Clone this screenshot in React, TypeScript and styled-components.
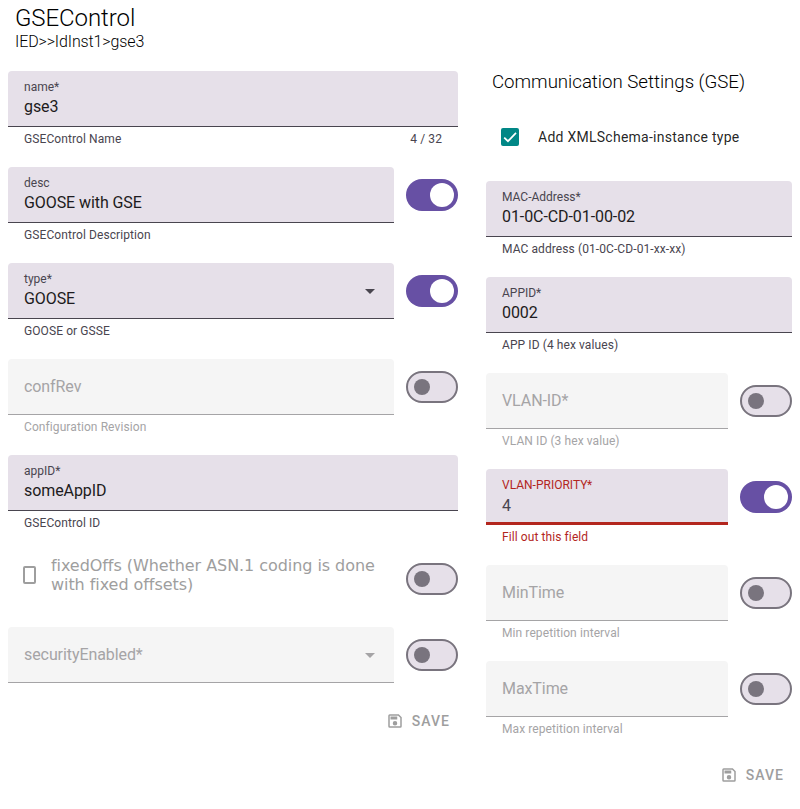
import React from 'react';
import styled, { createGlobalStyle } from 'styled-components';

const Global = createGlobalStyle`
  * { box-sizing: border-box; }
  body { margin: 0; background: #fff; font-family: Roboto, sans-serif; color: #1d1b20; }
`;
const Page = styled.main`
  width: 800px; height: 809px; overflow: hidden; padding: 0 8px;
`;
const Title = styled.h1`
  margin: 0; padding: 4px 7px 0; font-size: 24px; line-height: 28px; font-weight: 300; color: #000; letter-spacing: -0.07px;
`;
const Path = styled.div`
  padding: 0 7px; font-size: 16px; line-height: 19px; font-weight: 300; color: #000; letter-spacing: -0.12px;
`;
const Columns = styled.div`
  display: grid; grid-template-columns: 450px 306px; column-gap: 28px; margin-top: 20px; align-items: start;
`;
const Column = styled.section`
  display: flex; flex-direction: column;
`;
const Row = styled.div<{ $h?: number }>`
  display: flex; gap: 12px; height: ${p => p.$h ?? 96}px; align-items: flex-start;
`;
const FieldWrap = styled.div`
  flex: 1; min-width: 0;
`;
const Box = styled.div<{ $state: string }>`
  height: 56px; padding: 9px 16px 0; border-radius: 4px 4px 0 0; display: flex; justify-content: space-between;
  background: ${p => (p.$state === 'disabled' ? '#f5f5f5' : '#e6e0e9')};
  border-bottom: ${p => (p.$state === 'error' ? '3px solid #b3261e' : p.$state === 'disabled' ? '1px solid #a5a4a6' : '1px solid #49454f')};
`;
const Label = styled.div<{ $error: boolean }>`
  font-size: 12px; line-height: 14px; color: ${p => (p.$error ? '#b3261e' : '#49454f')};
`;
const Value = styled.div<{ $error: boolean }>`
  font-size: 16px; line-height: 24px; padding-top: ${p => (p.$error ? 2 : 1)}px; letter-spacing: -0.08px;
  color: ${p => (p.$error ? '#49454f' : '#1d1b20')};
`;
const Placeholder = styled.div`
  font-size: 16px; line-height: 24px; padding-top: 7px; letter-spacing: -0.08px; color: #a5a4a6;
`;
const Support = styled.div<{ $state: string }>`
  display: flex; justify-content: space-between; padding: 4px 16px 0; font-size: 12px; line-height: 16px; letter-spacing: 0.09px;
  color: ${p => (p.$state === 'error' ? '#b3261e' : p.$state === 'disabled' ? '#a5a4a6' : '#49454f')};
`;
const Arrow = styled.svg`
  width: 10px; height: 5px; margin: 17px 3px 0 0; flex: none;
`;
const Track = styled.div<{ $on: boolean }>`
  width: 52px; height: 32px; margin-top: 12px; flex: none; border-radius: 16px; display: flex; align-items: center;
  justify-content: ${p => (p.$on ? 'flex-end' : 'flex-start')};
  padding: 0 ${p => (p.$on ? 4 : 6)}px;
  background: ${p => (p.$on ? '#6750a4' : '#e6e0e9')};
  border: ${p => (p.$on ? 'none' : '2px solid #79747e')};
`;
const Knob = styled.span<{ $on: boolean }>`
  width: ${p => (p.$on ? 24 : 16)}px; height: ${p => (p.$on ? 24 : 16)}px; border-radius: 50%;
  background: ${p => (p.$on ? '#fff' : '#79747e')};
`;
const SectionTitle = styled.h2`
  margin: 0; padding: 0 6px; height: 50px; font-size: 18.7px; line-height: 22px; font-weight: 300; color: #000; letter-spacing: -0.03px;
`;
const CheckRow = styled.label`
  display: flex; align-items: center; height: 32px; padding-left: 15px; gap: 19px; font-size: 14px;
  letter-spacing: 0.26px; color: rgba(0, 0, 0, 0.87); margin-bottom: 28px;
`;
const CheckIcon = styled.svg`
  width: 18px; height: 18px; flex: none;
`;
const OffsetBox = styled.span`
  width: 13px; height: 18px; border: 2px solid #9e9e9e; border-radius: 2px; margin: 15px 0 0 15px; flex: none;
`;
const OffsetText = styled.div`
  flex: 1; margin: 5px 0 0 3px; font: 16px/19px "DejaVu Sans", sans-serif; letter-spacing: -0.06px; color: #9e9e9e;
`;
const Save = styled.button`
  align-self: flex-end; display: flex; align-items: center; gap: 8px; height: 36px; padding: 0 8px; border: 0;
  background: none; font: 500 14px Roboto, sans-serif; letter-spacing: 1px; color: #9e9e9e;
`;

interface FieldProps {
  label: string; value?: string; help?: string; count?: string; select?: boolean;
  error?: boolean; toggle?: boolean; height?: number;
}
function Field({ label, value, help, count, select, error = false, toggle, height }: FieldProps) {
  const disabled = value === undefined;
  const state = error ? 'error' : disabled ? 'disabled' : 'normal';
  return (
    <Row $h={height}>
      <FieldWrap>
        <Box $state={state}>
          {disabled ? <Placeholder>{label}</Placeholder> : (
            <div><Label $error={error}>{label}</Label><Value $error={error}>{value}</Value></div>
          )}
          {select && <Arrow viewBox="0 0 10 5"><path d="M0 0h10L5 5z" fill={disabled ? '#a5a4a6' : '#49454f'} /></Arrow>}
        </Box>
        {help && <Support $state={state}><span>{help}</span>{count && <span>{count}</span>}</Support>}
      </FieldWrap>
      {toggle !== undefined && <Switch on={toggle} />}
    </Row>
  );
}
function Switch({ on }: { on: boolean }) {
  return <Track $on={on} role="switch" aria-checked={on}><Knob $on={on} /></Track>;
}
function SaveButton() {
  return (
    <Save>
      <svg width="18" height="18" viewBox="0 0 24 24" fill="currentColor">
        <path d="M17 3H5a2 2 0 0 0-2 2v14a2 2 0 0 0 2 2h14a2 2 0 0 0 2-2V7zm2 16H5V5h11.170L19 7.830zm-7-7a3 3 0 1 0 0 6 3 3 0 0 0 0-6M6 6h9v4H6z" />
      </svg>
      SAVE
    </Save>
  );
}

export default function App() {
  return (
    <>
      <Global />
      <Page>
        <Title>GSEControl</Title>
        <Path>IED&gt;&gt;IdInst1&gt;gse3</Path>
        <Columns>
          <Column>
            <Field label="name*" value="gse3" help="GSEControl Name" count="4 / 32" />
            <Field label="desc" value="GOOSE with GSE" help="GSEControl Description" toggle />
            <Field label="type*" value="GOOSE" help="GOOSE or GSSE" select toggle />
            <Field label="confRev" help="Configuration Revision" toggle={false} />
            <Field label="appID*" value="someAppID" help="GSEControl ID" />
            <Row $h={76}>
              <OffsetBox />
              <OffsetText>fixedOffs (Whether ASN.1 coding is done with fixed offsets)</OffsetText>
              <Switch on={false} />
            </Row>
            <Field label="securityEnabled*" select toggle={false} height={76} />
            <SaveButton />
          </Column>
          <Column>
            <SectionTitle>Communication Settings (GSE)</SectionTitle>
            <CheckRow>
              <CheckIcon viewBox="0 0 18 18"><rect width="18" height="18" rx="2" fill="#018786" /><path d="M3.200 9.600l3.800 3.600 8-8.400" fill="none" stroke="#fff" strokeWidth="1.700" /></CheckIcon>
              Add XMLSchema-instance type
            </CheckRow>
            <Field label="MAC-Address*" value="01-0C-CD-01-00-02" help="MAC address (01-0C-CD-01-xx-xx)" />
            <Field label="APPID*" value="0002" help="APP ID (4 hex values)" />
            <Field label="VLAN-ID*" help="VLAN ID (3 hex value)" toggle={false} />
            <Field label="VLAN-PRIORITY*" value="4" help="Fill out this field" error toggle />
            <Field label="MinTime" help="Min repetition interval" toggle={false} />
            <Field label="MaxTime" help="Max repetition interval" toggle={false} />
            <SaveButton />
          </Column>
        </Columns>
      </Page>
    </>
  );
}
